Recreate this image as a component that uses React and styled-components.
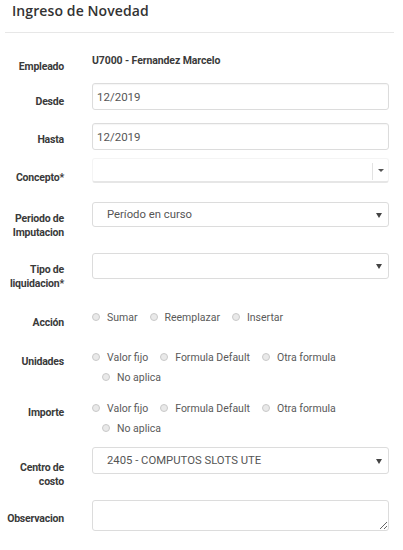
import styled, { createGlobalStyle } from 'styled-components';

const GlobalStyle = createGlobalStyle`
  html, body {
    margin: 0;
    padding: 0;
    background: #fff;
  }
  body {
    font-family: Roboto, "Liberation Sans", Arial, sans-serif;
  }
  * {
    box-sizing: border-box;
  }
`;

const Page = styled.div`
  width: 403px;
  height: 550px;
  overflow: hidden;
  background: #fff;
`;

const Header = styled.div`
  padding: 1px 12px 0;
`;

const Title = styled.h1`
  margin: 0;
  font-family: "Open Sans", Roboto, sans-serif;
  font-size: 14px;
  line-height: 20px;
  font-weight: 600;
  color: #333;
  letter-spacing: 0.1px;
`;

const Divider = styled.hr`
  margin: 11px 9px 0 5px;
  border: 0;
  border-top: 1px solid #e7e7e7;
`;

const Form = styled.form`
  padding-top: 21px;
`;

const Row = styled.div`
  display: flex;
  align-items: flex-start;
  margin-top: ${({ mt }) => mt || 0}px;
`;

const Label = styled.label`
  flex: 0 0 64px;
  width: 64px;
  text-align: right;
  padding-top: ${({ pt }) => pt || 0}px;
  font-size: 10.5px;
  line-height: 14px;
  font-weight: 700;
  letter-spacing: -0.2px;
  color: #3a3a3a;
`;

const Control = styled.div`
  margin-left: 28px;
  width: 297px;
`;

const StaticValue = styled.div`
  font-size: 10.5px;
  line-height: 14px;
  font-weight: 700;
  letter-spacing: -0.1px;
  color: #3a3a3a;
`;

const TextInput = styled.input`
  display: block;
  width: 100%;
  height: ${({ h }) => h || 27}px;
  padding: 0 4px;
  border: 1px solid #dcdcdc;
  border-radius: 3px;
  box-shadow: inset 0 1px 1px rgba(0, 0, 0, 0.04);
  font-family: Roboto, sans-serif;
  font-size: 11.5px;
  color: #555;
  background: #fff;
  outline: none;
`;

const SelectBox = styled.div`
  position: relative;
  height: ${({ h }) => h || 26}px;
  border: 1px solid #dcdcdc;
  border-radius: 3px;
  display: flex;
  align-items: center;
  padding: 0 14px;
  font-size: 11.3px;
  color: #555;
  background: #fff;
`;

const Caret = styled.span`
  position: absolute;
  right: 6px;
  top: 50%;
  margin-top: -2px;
  width: 0;
  height: 0;
  border-left: 3px solid transparent;
  border-right: 3px solid transparent;
  border-top: 5px solid #444;
`;

const ComboBox = styled.div`
  position: relative;
  height: 25px;
  border: 1px solid #f4f4f4;
  border-bottom: 2px solid #e6e6e6;
  border-radius: 3px;
  background: #fff;
`;

const ComboSep = styled.span`
  position: absolute;
  right: 15px;
  top: 4px;
  bottom: 1px;
  border-left: 1px solid #e2e2e2;
`;

const ComboCaret = styled.span`
  position: absolute;
  right: 4px;
  top: 10px;
  width: 0;
  height: 0;
  border-left: 3px solid transparent;
  border-right: 3px solid transparent;
  border-top: 3px solid #555;
`;

const RadioGroup = styled.div`
  display: flex;
  flex-wrap: wrap;
`;

const RadioItem = styled.label`
  display: inline-flex;
  align-items: center;
  height: 20px;
  margin-right: 12px;
  font-size: 10.5px;
  color: #5a5a5a;
  &:nth-child(4) {
    margin-left: 10px;
  }
`;

const RadioDot = styled.span`
  width: 8px;
  height: 8px;
  border-radius: 50%;
  background: #e9e9e9;
  border: 1px solid #c9c9c9;
  margin-right: 7px;
  flex: 0 0 auto;
`;

const TextArea = styled.textarea`
  display: block;
  width: 100%;
  height: 31px;
  border: 1px solid #dcdcdc;
  border-radius: 3px;
  resize: vertical;
  font-family: Roboto, sans-serif;
  outline: none;
`;

function Radios({ options }) {
  return (
    <RadioGroup>
      {options.map((o) => (
        <RadioItem key={o}>
          <RadioDot />
          {o}
        </RadioItem>
      ))}
    </RadioGroup>
  );
}

const calculo = ['Valor fijo', 'Formula Default', 'Otra formula', 'No aplica'];

export default function App() {
  return (
    <Page>
      <GlobalStyle />
      <Header>
        <Title>Ingreso de Novedad</Title>
      </Header>
      <Divider />
      <Form>
        <Row>
          <Label pt={6}>Empleado</Label>
          <Control>
            <StaticValue>U7000 - Fernandez Marcelo</StaticValue>
          </Control>
        </Row>
        <Row mt={9}>
          <Label pt={12}>Desde</Label>
          <Control>
            <TextInput defaultValue="12/2019" />
          </Control>
        </Row>
        <Row mt={13}>
          <Label pt={10}>Hasta</Label>
          <Control>
            <TextInput defaultValue="12/2019" />
          </Control>
        </Row>
        <Row mt={8}>
          <Label pt={13}>Concepto*</Label>
          <Control>
            <ComboBox>
              <ComboSep />
              <ComboCaret />
            </ComboBox>
          </Control>
        </Row>
        <Row mt={17}>
          <Label pt={10}>Periodo de Imputacion</Label>
          <Control>
            <SelectBox h={25}>
              Período en curso
              <Caret />
            </SelectBox>
          </Control>
        </Row>
        <Row mt={13}>
          <Label pt={10}>Tipo de liquidacion*</Label>
          <Control>
            <SelectBox>
              <Caret />
            </SelectBox>
          </Control>
        </Row>
        <Row mt={16}>
          <Label pt={9}>Acción</Label>
          <Control>
            <Radios options={['Sumar', 'Reemplazar', 'Insertar']} />
          </Control>
        </Row>
        <Row mt={17}>
          <Label pt={8}>Unidades</Label>
          <Control>
            <Radios options={calculo} />
          </Control>
        </Row>
        <Row mt={11}>
          <Label pt={8}>Importe</Label>
          <Control>
            <Radios options={calculo} />
          </Control>
        </Row>
        <Row mt={9}>
          <Label pt={14}>Centro de costo</Label>
          <Control>
            <SelectBox h={27}>
              2405 - COMPUTOS SLOTS UTE
              <Caret />
            </SelectBox>
          </Control>
        </Row>
        <Row mt={11}>
          <Label pt={12}>Observacion</Label>
          <Control>
            <TextArea />
          </Control>
        </Row>
      </Form>
    </Page>
  );
}
